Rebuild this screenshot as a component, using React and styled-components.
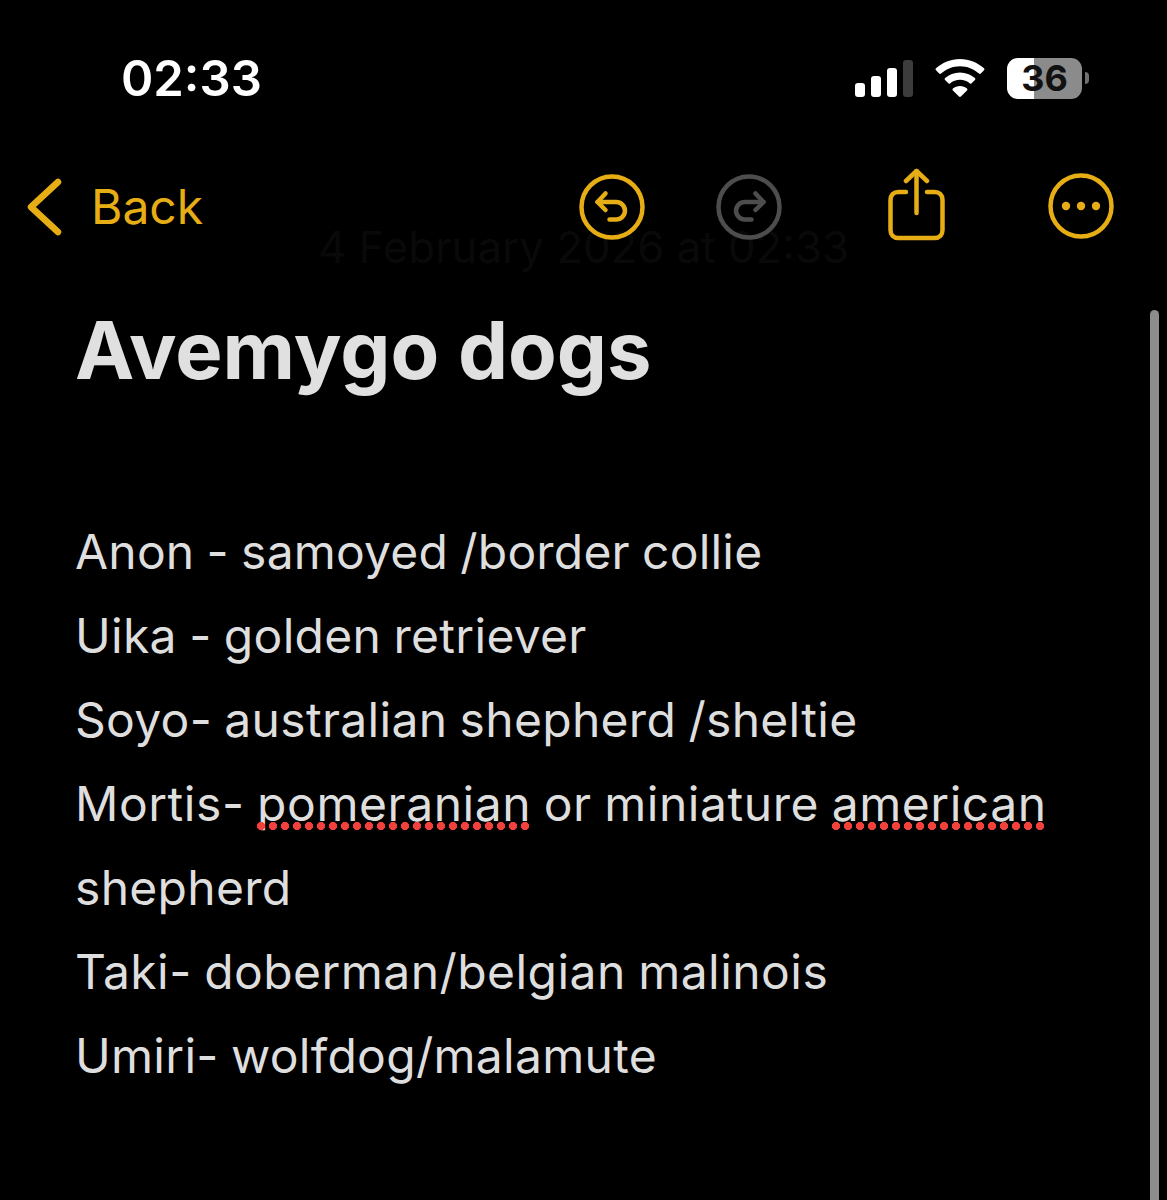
import React from "react";
import styled, { createGlobalStyle } from "styled-components";

const GlobalStyle = createGlobalStyle`
  html, body {
    margin: 0;
    padding: 0;
    background: #000;
  }
`;

const accent = "#e6ae14";

const Screen = styled.div`
  position: relative;
  width: 1167px;
  height: 1200px;
  overflow: hidden;
  background: #000;
  color: #e2e2e2;
  font-family: Inter, "Liberation Sans", sans-serif;
`;

const StatusBar = styled.header`
  display: flex;
  align-items: center;
  justify-content: space-between;
  height: 50px;
  padding: 53px 78px 0 121px;
`;

const Clock = styled.span`
  padding-top: 2px;
  font-size: 49px;
  line-height: 50px;
  font-weight: 600;
  color: #fff;
`;

const StatusIcons = styled.div`
  display: flex;
  align-items: center;
  gap: 22px;
`;

const Signal = styled.div`
  display: flex;
  align-items: flex-end;
  gap: 6px;
  height: 37px;
`;

const SignalBar = styled.i`
  display: block;
  width: 10px;
  height: ${(p) => p.$h}px;
  border-radius: 3px;
  background: ${(p) => (p.$off ? "#3c3c3c" : "#fff")};
`;

const Battery = styled.div`
  display: flex;
  align-items: center;
  gap: 3px;
`;

const BatteryBody = styled.div`
  width: 75px;
  height: 41px;
  border-radius: 11px;
  background: linear-gradient(90deg, #fff 0 36%, #8b8b8b 36% 100%);
  color: #111;
  font-size: 36px;
  line-height: 41px;
  font-weight: 700;
  text-align: center;
`;

const BatteryCap = styled.i`
  display: block;
  width: 4px;
  height: 12px;
  border-radius: 0 6px 6px 0;
  background: #6f6f6f;
`;

/* sits above the faded timestamp that scrolls under it */
const NavBar = styled.nav`
  position: relative;
  z-index: 1;
  display: flex;
  align-items: center;
  height: 80px;
  margin-top: 64px;
  padding-left: 27px;
`;

const BackLink = styled.a`
  display: flex;
  align-items: center;
  gap: 28px;
  width: 552px;
  color: ${accent};
  font-size: 48px;
  line-height: 60px;
`;

const Tools = styled.div`
  display: flex;
  align-items: center;
`;

const ToolIcon = styled.svg`
  display: block;
  flex: none;
  margin-left: ${(p) => p.$gap || 0}px;
  fill: none;
  stroke: ${(p) => (p.$muted ? "#4d4d4d" : accent)};
  stroke-width: ${(p) => p.$weight || 4.5};
  stroke-linecap: round;
  stroke-linejoin: round;
`;

const StampLine = styled.div`
  margin-top: -23px;
  padding-left: 318px;
  font-size: 43.8px;
  line-height: 48px;
  color: #090909;
`;

const Note = styled.main`
  padding: 0 110px 0 75px;
`;

const Title = styled.h1`
  margin: 36px 0 0;
  font-size: 79.5px;
  line-height: 84px;
  font-weight: 700;
  color: #e0e0e0;
`;

const Body = styled.div`
  margin-top: 118px;
`;

const Line = styled.div`
  font-size: 48px;
  line-height: 84px;
  letter-spacing: ${(p) => p.$track || 0.3}px;
  word-spacing: -1.5px;
  white-space: nowrap;
  color: #dedede;
`;

const Misspelled = styled.span`
  position: relative;

  &::after {
    content: "";
    position: absolute;
    left: 0;
    right: 0;
    bottom: 3px;
    height: 8px;
    background: radial-gradient(circle at 4px 4px, #f2413c 3.8px, transparent 4.4px) 0 0 / 12px 8px repeat-x;
  }
`;

const ScrollThumb = styled.div`
  position: absolute;
  top: 310px;
  right: 8px;
  bottom: 0;
  width: 9px;
  border-radius: 5px 5px 0 0;
  background: #8c8c8c;
`;

const signalBars = [
  { h: 14 },
  { h: 21 },
  { h: 29 },
  { h: 37, off: true },
];

function StatusBarRow() {
  return (
    <StatusBar>
      <Clock>02:33</Clock>
      <StatusIcons>
        <Signal>
          {signalBars.map((bar) => (
            <SignalBar key={bar.h} $h={bar.h} $off={bar.off} />
          ))}
        </Signal>
        <svg width="50" height="38" viewBox="0 0 50 38" fill="#fff">
          <path d="M25 0C15.800 0 7.500 3.500 1 9.300c-.6.500-.6 1.300 0 1.900l3.200 3.300c.5.500 1.300.5 1.900 0C11.200 10 17.800 7.200 25 7.200s13.800 2.800 18.900 7.300c.6.500 1.400.5 1.900 0l3.200-3.300c.6-.6.600-1.400 0-1.900C42.500 3.500 34.200 0 25 0z" />
          <path d="M25 13.500c-5.700 0-10.900 2.100-14.900 5.600-.6.500-.6 1.300 0 1.900l3.200 3.300c.5.500 1.300.5 1.800.1 2.700-2.200 6.200-3.600 9.900-3.600s7.200 1.400 9.900 3.600c.5.400 1.300.4 1.800-.1l3.200-3.300c.6-.6.600-1.400 0-1.900-4-3.500-9.200-5.600-14.900-5.600z" />
          <path d="M25 27c-2.700 0-5.200 1-7.100 2.600-.5.500-.6 1.300 0 1.800l6.100 6.200c.5.500 1.400.5 1.900 0l6.100-6.200c.6-.5.500-1.300 0-1.800C30.200 28 27.700 27 25 27z" />
        </svg>
        <Battery>
          <BatteryBody>36</BatteryBody>
          <BatteryCap />
        </Battery>
      </StatusIcons>
    </StatusBar>
  );
}

function Toolbar() {
  return (
    <NavBar>
      <BackLink>
        <ToolIcon $weight={6.5} width="36" height="60" viewBox="0 0 36 60">
          <path d="M31 5 4 30l27 25" />
        </ToolIcon>
        Back
      </BackLink>
      <Tools>
        <ToolIcon width="66" height="66" viewBox="0 0 66 66">
          <circle cx="33" cy="33" r="30.500" />
          <path d="M26.500 19.500 18.500 28l8 8" />
          <path d="M18.500 28H37.200a8.750 8.750 0 0 1 0 17.500H30.500" />
        </ToolIcon>
        <ToolIcon $muted $gap={71} width="66" height="66" viewBox="0 0 66 66">
          <circle cx="33" cy="33" r="30.500" />
          <path d="M39.500 19.500 47.500 28l-8 8" />
          <path d="M47.500 28H28.800a8.750 8.750 0 0 0 0 17.500H35.500" />
        </ToolIcon>
        <ToolIcon $gap={104} width="60" height="78" viewBox="0 0 60 78">
          <path d="M20 24H12.500c-5 0-8 3-8 8v30c0 5 3 8 8 8h36c5 0 8-3 8-8V32c0-5-3-8-8-8H41" />
          <path d="M30.500 45V3" />
          <path d="M20 13 30.500 3 41 13" />
        </ToolIcon>
        <ToolIcon $gap={102} width="66" height="68" viewBox="0 0 66 68">
          <circle cx="33" cy="33" r="30.500" />
          <circle cx="18" cy="33" r="4.200" fill={accent} stroke="none" />
          <circle cx="33" cy="33" r="4.200" fill={accent} stroke="none" />
          <circle cx="48" cy="33" r="4.200" fill={accent} stroke="none" />
        </ToolIcon>
      </Tools>
    </NavBar>
  );
}

export default function App() {
  return (
    <Screen>
      <GlobalStyle />
      <StatusBarRow />
      <Toolbar />
      <StampLine>4 February 2026 at 02:33</StampLine>
      <Note>
        <Title>Avemygo dogs</Title>
        <Body>
          <Line $track={0.2}>Anon - samoyed /border collie</Line>
          <Line>Uika - golden retriever</Line>
          <Line>Soyo- australian shepherd /sheltie</Line>
          <Line $track={0.55}>
            Mortis- <Misspelled>pomeranian</Misspelled> or miniature{" "}
            <Misspelled>american</Misspelled>
          </Line>
          <Line>shepherd</Line>
          <Line $track={0.45}>Taki- doberman/belgian malinois</Line>
          <Line>Umiri- wolfdog/malamute</Line>
        </Body>
      </Note>
      <ScrollThumb />
    </Screen>
  );
}
